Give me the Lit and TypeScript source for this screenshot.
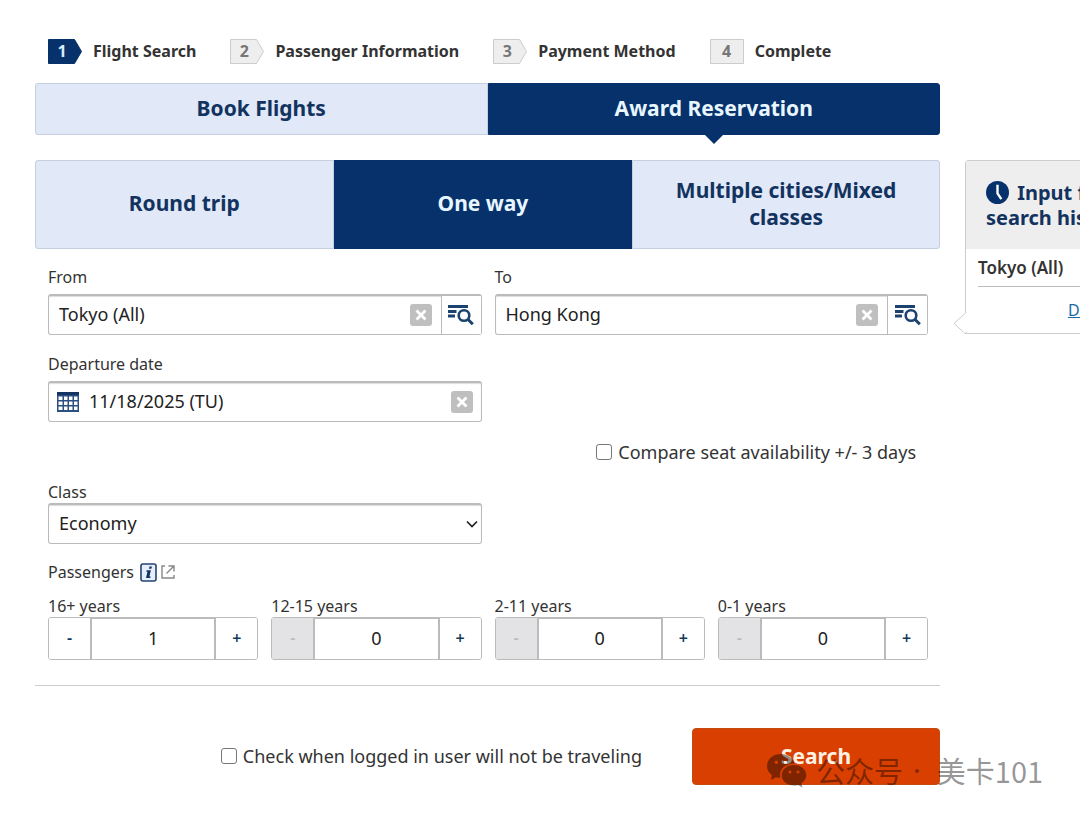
import { LitElement, html, css, svg } from "lit";
import { customElement, state } from "lit/decorators.js";

const clearIcon = svg`<svg viewBox="0 0 22 22" width="22" height="22" aria-hidden="true"><rect width="22" height="22" rx="3" fill="#bfbfbf"/><path d="M6.500 6.500l9 9M15.500 6.500l-9 9" stroke="#fff" stroke-width="2.800"/></svg>`;

const listSearchIcon = svg`<svg viewBox="0 0 26 22" width="26" height="22" aria-hidden="true" fill="none" stroke="#1c426f"><path d="M0 2.500h20M0 7.500h8.500M0 12h7" stroke-width="2.800"/><circle cx="16" cy="11.500" r="5.300" stroke-width="2.600"/><path d="M19.800 15.300l5 5" stroke-width="3"/></svg>`;

const calendarIcon = svg`<svg viewBox="0 0 22 20" width="22" height="20" aria-hidden="true"><rect width="22" height="20" fill="#2a4f80"/><rect width="22" height="3" fill="#12335f"/><g fill="#fff"><path d="M1.500 4.500h4v3.500h-4zM7 4.500h3.500v3.500H7zM12 4.500h3.500v3.500H12zM17 4.500h3.500v3.500H17zM1.500 9.500h4v3.500h-4zM7 9.500h3.500v3.500H7zM12 9.500h3.500v3.500H12zM17 9.500h3.500v3.500H17zM1.500 14.500h4v3.500h-4zM7 14.500h3.500v3.500H7zM12 14.500h3.500v3.500H12zM17 14.500h3.500v3.500H17z"/></g></svg>`;

@customElement("app-root")
export class AppRoot extends LitElement {
  @state() private counts = [1, 0, 0, 0];

  static styles = css`
    :host {
      display: block;
      overflow: hidden;
      min-height: 100vh;
      background: #fff;
      color: #333;
      font: 16px/24px "Noto Sans", "Open Sans", sans-serif;
    }
    * { box-sizing: border-box; }
    button, input, select { font: inherit; color: inherit; margin: 0; }
    button { cursor: pointer; padding: 0; }
    svg { display: block; flex: none; }
    .steps {
      display: flex;
      gap: 34px;
      list-style: none;
      margin: 0;
      padding: 39px 48px 19px;
      font-weight: 700;
      line-height: 25px;
      white-space: nowrap;
    }
    .step { display: flex; align-items: center; gap: 11px; }
    .mark { position: relative; width: 34px; height: 25px; color: #777; }
    .mark.on { color: #d8ecfa; }
    .mark svg { position: absolute; inset: 0; }
    .num { position: relative; display: block; width: 28px; text-align: center; }
    .last .num { width: 34px; }
    .page {
      display: grid;
      grid-template-columns: minmax(0, 1fr) 252px;
      column-gap: 25px;
      padding-left: 35px;
      margin-right: -137px;
    }
    .kinds { display: grid; grid-template-columns: 1fr 1fr; margin-bottom: 25px; }
    .trips { display: grid; grid-template-columns: 33% 33% 34%; }
    .tab {
      position: relative;
      border: 1px solid #c5cfdf;
      background: #e1e8f8;
      color: #12335f;
      font-weight: 700;
      font-size: 21px;
      line-height: 27px;
    }
    .kinds .tab { height: 52px; padding-bottom: 2px; }
    .trips .tab { height: 89px; padding: 0 32px 2px; }
    .tab:first-child { border-radius: 3px 0 0 3px; }
    .tab:last-child { border-radius: 0 3px 3px 0; }
    .tab.on { background: #06316b; border-color: #06316b; color: #e8f6ff; }
    .kinds .on::after {
      content: "";
      position: absolute;
      left: 50%;
      top: 100%;
      margin-left: -10px;
      border: 10px solid transparent;
      border-top-color: #06316b;
      border-bottom: 0;
    }
    .form { padding: 16px 12px 25px 13px; border-bottom: 1px solid #ccc; }
    .grid { display: grid; grid-template-columns: 1fr 1fr; column-gap: 13px; }
    .label { display: block; height: 29px; }
    .label.tight { height: 23px; }
    .box {
      display: flex;
      align-items: center;
      height: 41px;
      border: 1px solid #bbb;
      border-top-width: 2px;
      border-radius: 3px;
      background: #fff;
      box-shadow: inset 0 1px 1px #ddd;
    }
    .box input { flex: 1; min-width: 0; height: 100%; border: 0; background: none; padding: 0 10px 2px; outline: 0; }
    .value { font-size: 18px; color: #222; }
    .icon { border: 0; background: none; }
    .clear { margin-right: 9px; }
    .clear.end { margin-right: 8px; }
    .lookup { width: 40px; height: 38px; border-left: 1px solid #bbb; display: grid; place-items: center; background: #fff; }
    .date { margin: 17px 0; }
    .cal { margin-left: 8px; }
    .check { display: flex; align-items: center; gap: 6px; font-size: 18px; line-height: 26px; }
    .check input { appearance: none; width: 16px; height: 16px; border: 1px solid #777; border-radius: 3px; background: #fff; }
    .compare { justify-content: flex-end; padding-right: 12px; margin-bottom: 15px; }
    .select { position: relative; }
    .select select { appearance: none; width: 100%; display: block; padding: 0 10px 2px; }
    .select svg { position: absolute; right: 4px; top: 17px; pointer-events: none; }
    .people { display: flex; align-items: center; gap: 4px; margin: 16px 0 10px; }
    .people span { margin-right: 2px; }
    .info { display: flex; align-items: center; gap: 4px; }
    .ages { display: grid; grid-template-columns: repeat(4, 1fr); gap: 13px; }
    .stepper { display: grid; grid-template-columns: 41px minmax(0, 1fr) 41px; height: 43px; border: 1px solid #bbb; border-radius: 3px; overflow: hidden; }
    .stepper button { border: 0; background: #fff; color: #12395a; padding-bottom: 2px; font-weight: 600; }
    .stepper button:disabled { background: #e3e3e5; color: #bbb; }
    .stepper input { text-align: center; border: solid #bbb; border-width: 1px 2px 0; min-width: 0; padding: 0 0 2px; border-radius: 0; outline: 0; }
    .actions { position: relative; display: flex; justify-content: flex-end; align-items: center; gap: 50px; padding-top: 42px; }
    .actions .check { padding-bottom: 2px; }
    .search { width: 248px; height: 57px; border: 1px solid #c54a10; border-radius: 4px; background: #d93f00; color: #fff2e4; font-weight: 700; font-size: 21px; padding-bottom: 2px; }
    .stamp {
      position: absolute;
      left: 731px;
      top: 66px;
      display: flex;
      align-items: center;
      gap: 8px;
      white-space: nowrap;
      color: rgba(0, 0, 0, 0.42);
      font: 29px/36px "Noto Sans CJK SC", sans-serif;
      pointer-events: none;
    }
    .dot { font-family: "Noto Sans", sans-serif; padding: 0 8px 0 2px; }
    .history { position: relative; align-self: start; margin-top: 77px; border: 1px solid #ccc; border-radius: 3px; }
    .history h2 { margin: 0; padding: 19px 20px; height: 88px; background: #eee; color: #12335f; font-weight: 700; font-size: 20px; line-height: 25px; }
    .history h2 svg { display: inline-block; vertical-align: -4px; margin-right: 3px; }
    .entry { margin: 0 12px; padding: 6px 0; border-bottom: 1px solid #bbb; font-weight: 600; font-size: 17px; line-height: 25px; }
    .del { display: block; width: fit-content; margin: 11px 22px 11px auto; color: #1a6aa8; }
    .tail { position: absolute; left: -13px; bottom: -1px; }
  `;

  private step(n: number, text: string) {
    const on = n === 1;
    const last = n === 4;
    return html`<li class="step ${last ? "last" : ""}">
      <span class="mark ${on ? "on" : ""}">
        <svg viewBox="0 0 34 25" width="34" height="25" aria-hidden="true">
          <path d=${last ? "M.5.5h33v24h-33z" : "M.5.5h26l7 12-7 12h-26z"} fill=${on ? "#06316b" : "#eee"} stroke=${on ? "#06316b" : "#ccc"} />
        </svg>
        <span class="num">${n}</span>
      </span>
      ${text}
    </li>`;
  }

  private place(id: string, label: string, value: string) {
    return html`<div>
      <label class="label" for=${id}>${label}</label>
      <div class="box">
        <input class="value" id=${id} .value=${value} />
        <button class="icon clear" aria-label="Clear">${clearIcon}</button>
        <button class="icon lookup" aria-label="List">${listSearchIcon}</button>
      </div>
    </div>`;
  }

  private change(i: number, by: number) {
    this.counts = this.counts.map((c, k) => (k === i ? Math.max(0, c + by) : c));
  }

  private age(label: string, i: number) {
    const count = this.counts[i];
    return html`<div>
      <label class="label tight" for="age${i}">${label}</label>
      <div class="stepper">
        <button ?disabled=${count === 0} @click=${() => this.change(i, -1)}>-</button>
        <input class="value" id="age${i}" inputmode="numeric" .value=${String(count)} />
        <button @click=${() => this.change(i, 1)}>+</button>
      </div>
    </div>`;
  }

  render() {
    return html`
      <ol class="steps">
        ${["Flight Search", "Passenger Information", "Payment Method", "Complete"].map((t, i) => this.step(i + 1, t))}
      </ol>
      <div class="page">
        <main>
          <div class="kinds">
            <button class="tab">Book Flights</button>
            <button class="tab on">Award Reservation</button>
          </div>
          <div class="trips">
            <button class="tab">Round trip</button>
            <button class="tab on">One way</button>
            <button class="tab">Multiple cities/Mixed classes</button>
          </div>
          <div class="form">
            <div class="grid">
              ${this.place("from", "From", "Tokyo (All)")}
              ${this.place("to", "To", "Hong Kong")}
            </div>
            <div class="grid date">
              <div>
                <label class="label" for="date">Departure date</label>
                <div class="box">
                  <span class="cal">${calendarIcon}</span>
                  <input class="value" id="date" .value=${"11/18/2025 (TU)"} />
                  <button class="icon clear end" aria-label="Clear">${clearIcon}</button>
                </div>
              </div>
            </div>
            <label class="check compare"><input type="checkbox" />Compare seat availability +/- 3 days</label>
            <div class="grid">
              <div>
                <label class="label tight" for="class">Class</label>
                <div class="select">
                  <select class="box value" id="class"><option>Economy</option></select>
                  <svg viewBox="0 0 12 8" width="12" height="8" aria-hidden="true"><path d="M1 1.500l5 5 5-5" fill="none" stroke="#222" stroke-width="1.700" /></svg>
                </div>
              </div>
            </div>
            <div class="people">
              <span>Passengers</span>
              <a class="info" href="#passengers" aria-label="Passengers">
                <svg viewBox="0 0 17 19" width="17" height="19">
                  <rect x="1" y="1" width="15" height="17" rx="2" fill="#e6eefb" stroke="#24446f" stroke-width="1.600" />
                  <path d="M9.500 3.500h2.400l-.5 2.300H9zM6.700 7.300h4.200l-1.500 6.200h1.200l-.3 1.500H6l1.500-6.200H6.300z" fill="#12335f" />
                </svg>
                <svg viewBox="0 0 14 14" width="14" height="14" fill="none" stroke="#888" stroke-width="1.400">
                  <path d="M4 1H1v12h12v-3M7.500 1H13v5.500M13 1L5.500 8.500" />
                </svg>
              </a>
            </div>
            <div class="ages">
              ${["16+ years", "12-15 years", "2-11 years", "0-1 years"].map((t, i) => this.age(t, i))}
            </div>
          </div>
          <div class="actions">
            <label class="check"><input type="checkbox" />Check when logged in user will not be traveling</label>
            <button class="search">Search</button>
            <div class="stamp">
              <svg viewBox="0 0 42 36" width="42" height="36" aria-hidden="true">
                <path fill="currentColor" fill-rule="evenodd" d="M15 2C6.500 2 1 7.500 1 14c0 4 2 7 5 9.300L5 28l5-2.700c1.500.4 3 .6 4.300.6C12.500 18 18.500 11.500 28.500 11.500 27 6 21.500 2 15 2zM10.300 8.500a1.700 1.700 0 110 3.400 1.700 1.700 0 010-3.400zM19.500 8.500a1.700 1.700 0 110 3.400 1.700 1.700 0 010-3.400z" />
                <path fill="currentColor" fill-rule="evenodd" d="M28 13c-7 0-12.300 4.500-12.300 10.300S21 33.500 28 33.500c1.400 0 2.800-.2 4-.6l4.500 2.500-1.200-4c3-2 5-4.800 5-8.100C40.300 17.500 35 13 28 13zM24 18.500a1.500 1.500 0 110 3 1.500 1.500 0 010-3zM32 18.500a1.500 1.500 0 110 3 1.500 1.500 0 010-3z" />
              </svg>
              <span>公众号</span><span class="dot">·</span><span>美卡101</span>
            </div>
          </div>
        </main>
        <aside class="history">
          <h2><svg viewBox="0 0 24 24" width="23" height="23" aria-hidden="true"><circle cx="12" cy="12" r="12" fill="#06316b" /><path d="M12 4v9l4 6" fill="none" stroke="#fff" stroke-width="2.500" /></svg> Input from search history</h2>
          <div class="entry">Tokyo (All)</div>
          <a class="del" href="#history">Delete all history</a>
          <svg class="tail" viewBox="0 0 14 22" width="14" height="22" aria-hidden="true"><path d="M13 0L1 11.500 13 21.500z" fill="#fff" /><path d="M13.500 0L1 11.500 12 21.500h2" fill="none" stroke="#ccc" /></svg>
        </aside>
      </div>
    `;
  }
}
